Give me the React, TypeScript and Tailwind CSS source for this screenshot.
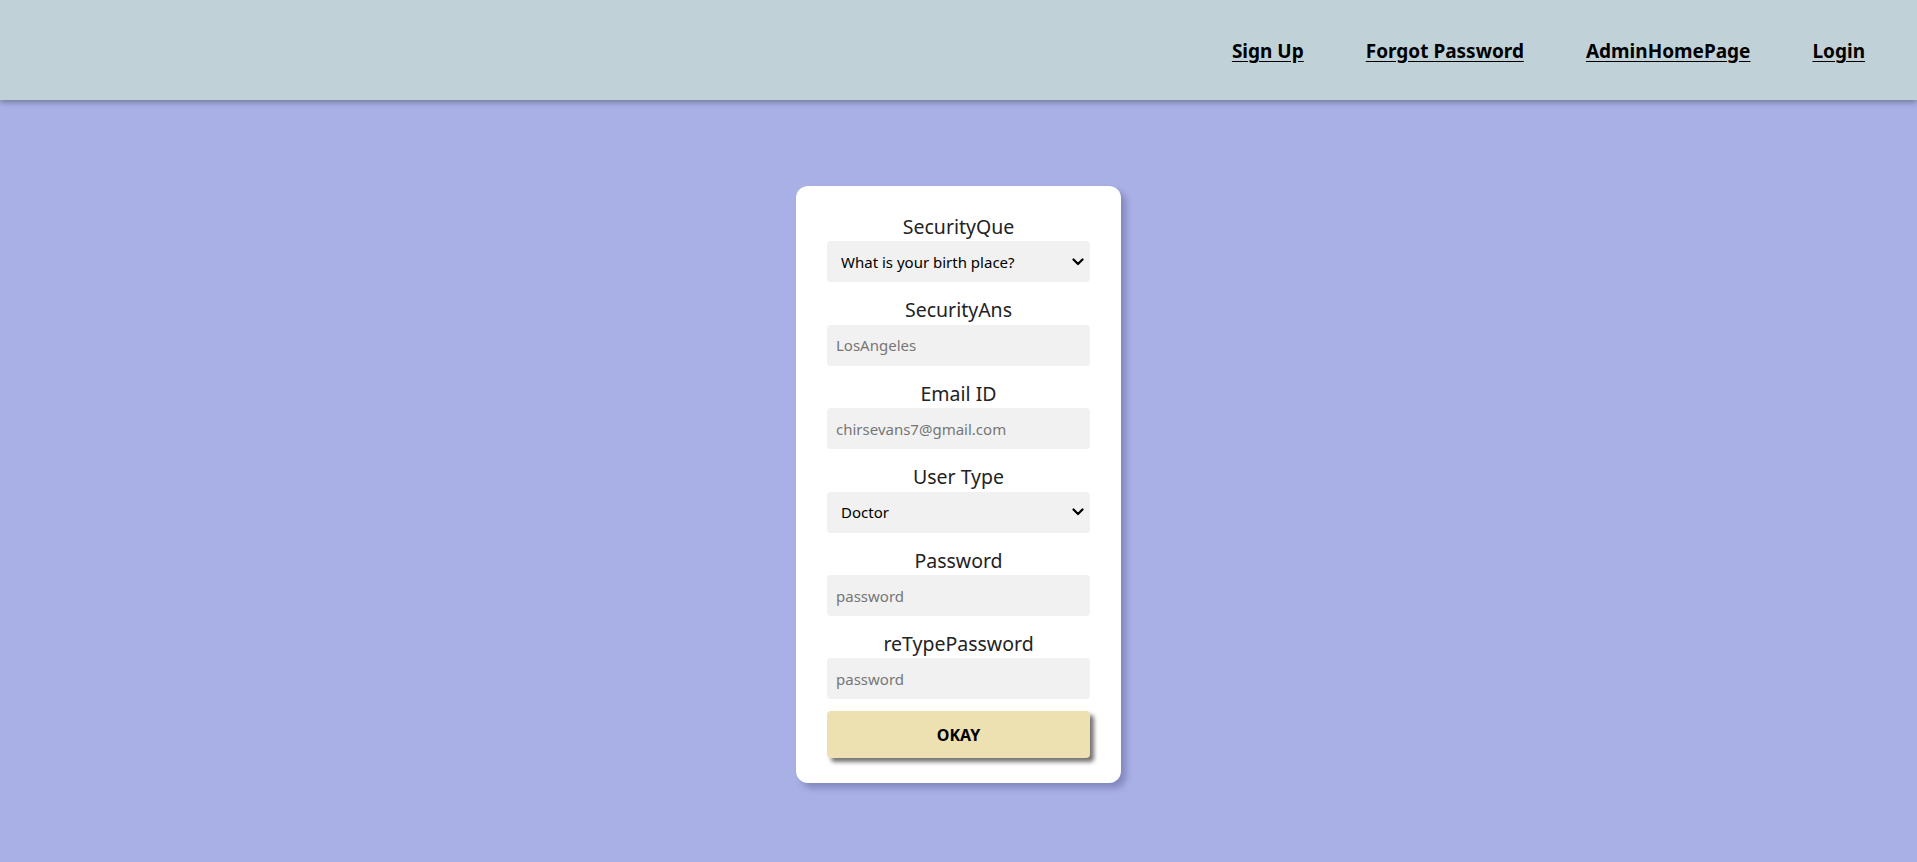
import { useState } from 'react'

const font = { fontFamily: '"Noto Sans", "Open Sans", Arial, sans-serif' }

function Chevron() {
  return (
    <svg viewBox="0 0 12 8" className="pointer-events-none absolute right-[6px] top-1/2 h-[8px] w-[12px] -translate-y-1/2" aria-hidden="true">
      <path d="M1.5 1.5L6 6L10.5 1.5" fill="none" stroke="#000" strokeWidth="2.2" strokeLinecap="round" strokeLinejoin="round" />
    </svg>
  )
}

function Label({ children }: { children: string }) {
  return <label className="mb-[2px] mt-[16px] block text-center text-[19.5px] leading-[24.4px] text-[#222]">{children}</label>
}

function Select({ value, options, onChange }: { value: string; options: string[]; onChange: (v: string) => void }) {
  return (
    <div className="relative">
      <select
        value={value}
        onChange={(e) => onChange(e.target.value)}
        className="block h-[41px] w-full appearance-none rounded-[4px] bg-[#f1f1f1] pl-[14px] pr-[24px] text-[15px] text-black outline-none"
      >
        {options.map((o) => (
          <option key={o}>{o}</option>
        ))}
      </select>
      <Chevron />
    </div>
  )
}

function Field({ type = 'text', placeholder }: { type?: string; placeholder: string }) {
  return (
    <input
      type={type}
      placeholder={placeholder}
      className="block h-[41px] w-full rounded-[4px] bg-[#f1f1f1] px-[9px] text-[15px] text-black outline-none placeholder:text-[#767676]"
    />
  )
}

export default function App() {
  const [question, setQuestion] = useState('What is your birth place?')
  const [userType, setUserType] = useState('Doctor')

  return (
    <div className="min-h-[862px] bg-[#a9b0e6]" style={font}>
      <nav className="flex h-[100px] items-center justify-end gap-[62px] bg-[#c0d2d7] pr-[52px] pt-[2px] shadow-[0_2px_6px_rgba(0,0,0,0.35)]">
        {['Sign Up', 'Forgot Password', 'AdminHomePage', 'Login'].map((l) => (
          <a key={l} href="#" className="text-[19px] font-bold text-black underline underline-offset-[3px]">
            {l}
          </a>
        ))}
      </nav>

      <div className="mx-auto mt-[86px] w-[325px] rounded-[12px] bg-white px-[31px] pb-[25px] pt-[13px] shadow-[5px_5px_6px_rgba(60,60,120,0.35)]">
        <Label>SecurityQue</Label>
        <Select
          value={question}
          onChange={setQuestion}
          options={['What is your birth place?', 'What is your pet name?', 'What is your favourite color?']}
        />
        <Label>SecurityAns</Label>
        <Field placeholder="LosAngeles" />
        <Label>Email ID</Label>
        <Field type="email" placeholder="chirsevans7@gmail.com" />
        <Label>User Type</Label>
        <Select value={userType} onChange={setUserType} options={['Doctor', 'Patient', 'Admin']} />
        <Label>Password</Label>
        <Field type="password" placeholder="password" />
        <Label>reTypePassword</Label>
        <Field type="password" placeholder="password" />
        <button
          type="button"
          className="mt-[12px] block h-[47px] w-full rounded-[4px] bg-[#ede1b1] text-[16px] font-bold text-black shadow-[4px_4px_4px_rgba(0,0,0,0.55)]"
        >
          OKAY
        </button>
      </div>
    </div>
  )
}
